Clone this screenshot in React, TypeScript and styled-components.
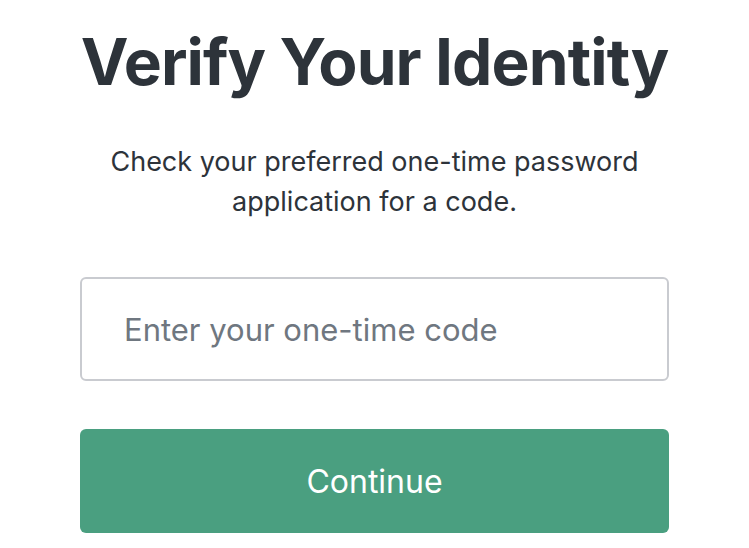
import React from "react";
import styled, { createGlobalStyle } from "styled-components";

const Global = createGlobalStyle`
  html, body { margin: 0; padding: 0; background: #ffffff; }
  body { font-family: Inter, "Noto Sans", "Liberation Sans", sans-serif; color: #2d333a; }
`;

const Page = styled.main`
  display: flex;
  justify-content: center;
  padding-top: 22px;
`;

const Card = styled.section`
  width: 589px;
  display: flex;
  flex-direction: column;
  align-items: center;
`;

const Title = styled.h1`
  margin: 0;
  font-size: 64px;
  line-height: 80px;
  font-weight: 700;
  letter-spacing: -0.9px;
  white-space: nowrap;
  color: #2d333a;
  text-align: center;
`;

const Subtitle = styled.p`
  margin: 40px 0 0;
  font-size: 27px;
  line-height: 40px;
  font-weight: 400;
  color: #2d333a;
  text-align: center;
  width: 100%;
`;

const Form = styled.form`
  width: 100%;
  display: flex;
  flex-direction: column;
  gap: 48px;
  margin-top: 55px;
`;

const Input = styled.input`
  box-sizing: border-box;
  width: 100%;
  height: 104px;
  border: 2px solid #c9cbd0;
  border-radius: 6px;
  padding: 0 42px;
  font-family: inherit;
  font-size: 31px;
  color: #2d333a;
  background: #fff;
  outline: none;
  &::placeholder { color: #6f7780; }
`;

const Button = styled.button`
  width: 100%;
  height: 104px;
  border: none;
  border-radius: 6px;
  background: #4a9f80;
  color: #ffffff;
  font-family: inherit;
  font-size: 32px;
  font-weight: 400;
  cursor: pointer;
`;

export default function App() {
  return (
    <>
      <Global />
      <Page>
        <Card>
          <Title>Verify Your Identity</Title>
          <Subtitle>
            Check your preferred one-time password
            <br />
            application for a code.
          </Subtitle>
          <Form onSubmit={(e) => e.preventDefault()}>
            <Input placeholder="Enter your one-time code" />
            <Button type="submit">Continue</Button>
          </Form>
        </Card>
      </Page>
    </>
  );
}
